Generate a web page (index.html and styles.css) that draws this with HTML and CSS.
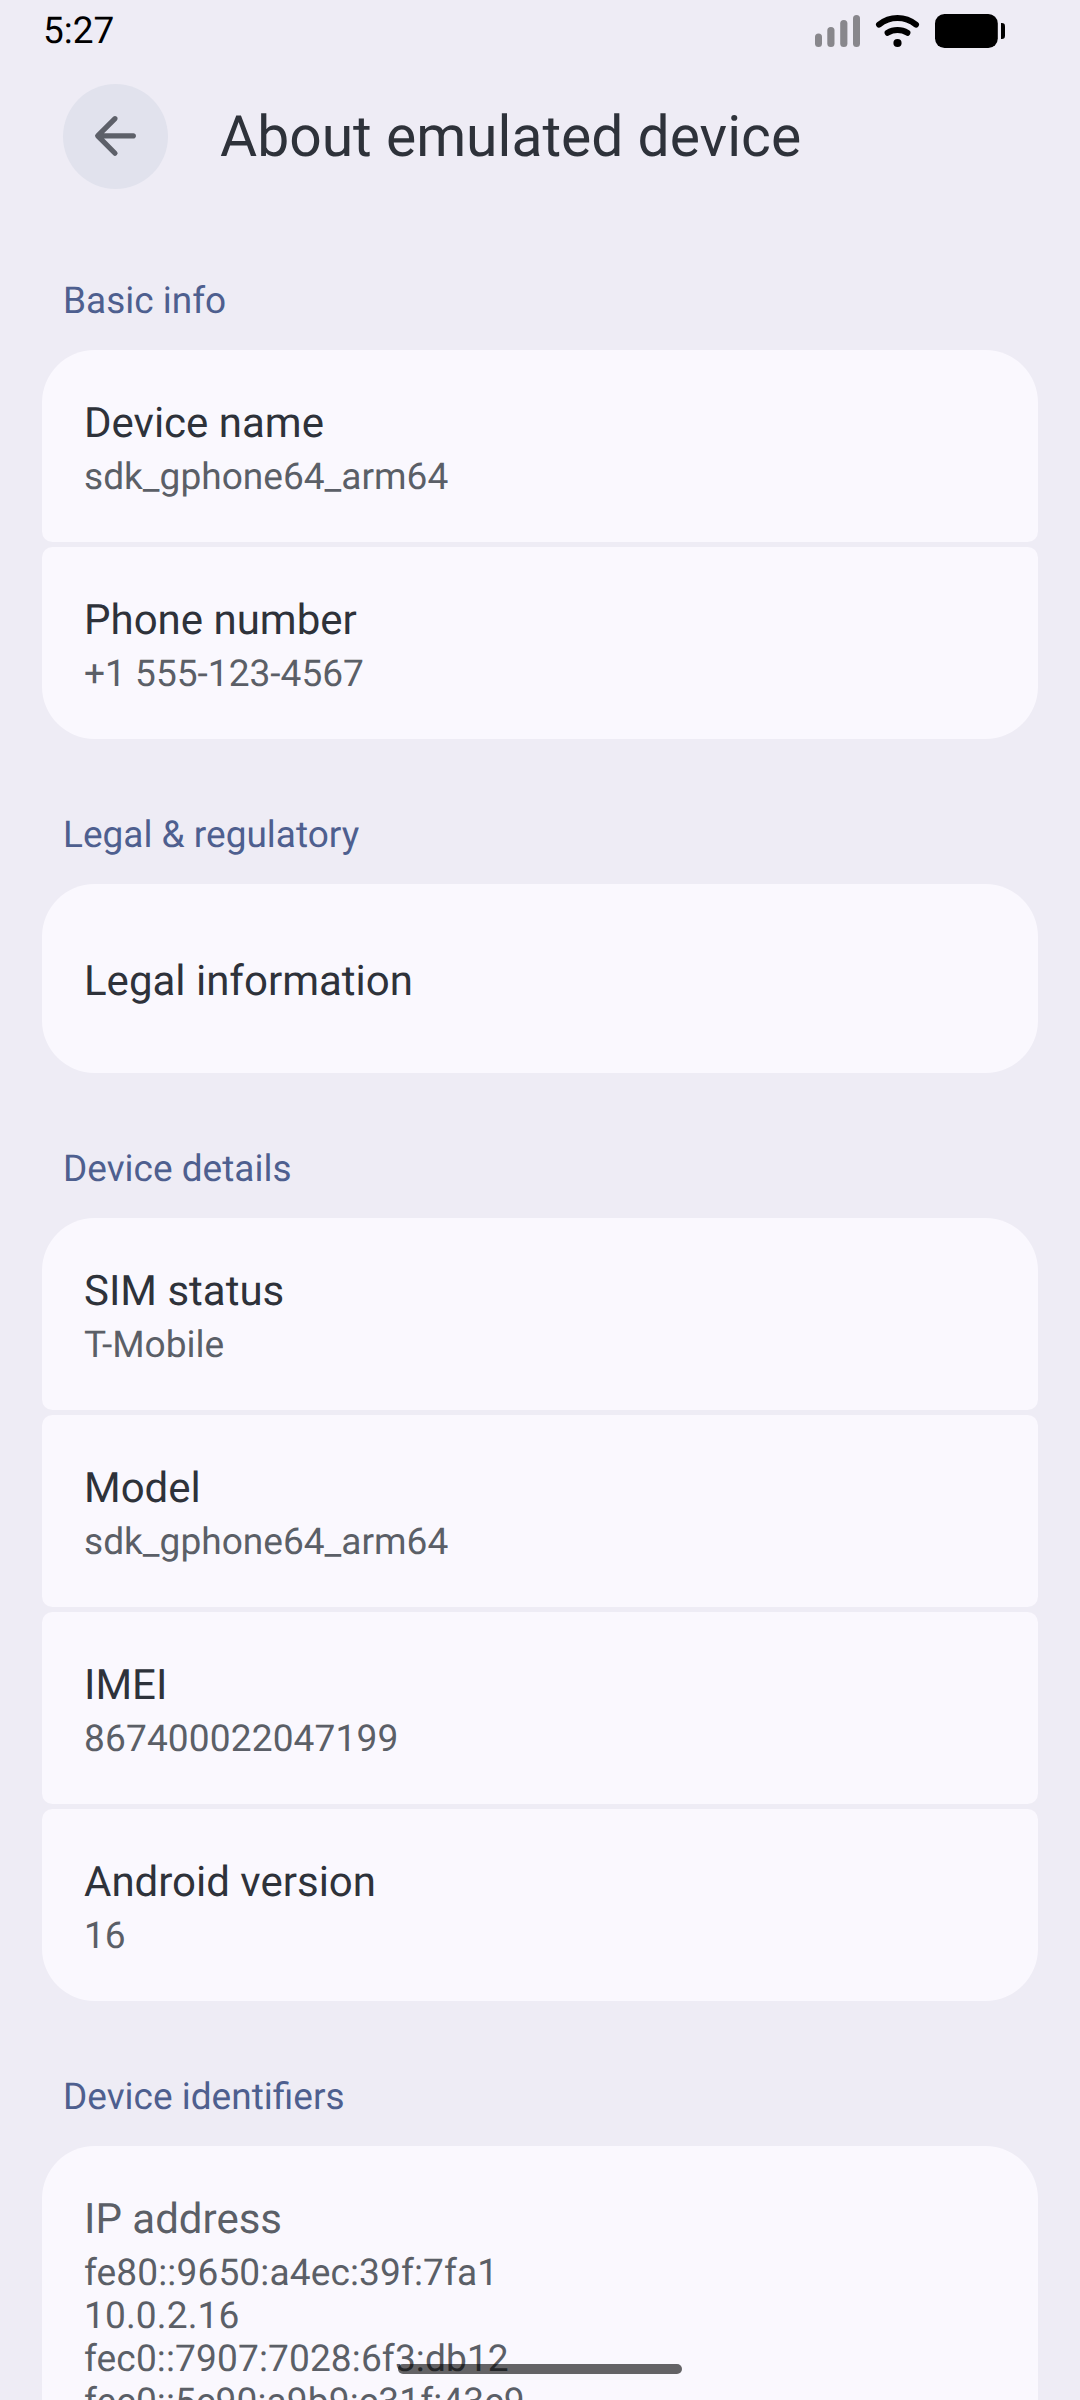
FILE: index.html
```
<!DOCTYPE html>
<html lang="en">
<head>
<meta charset="utf-8">
<title>About emulated device</title>
<link rel="stylesheet" href="styles.css">
</head>
<body>
<div class="screen">
  <header class="status-bar">
    <span class="clock">5:27</span>
    <svg class="status-icons" width="192" height="40" viewBox="814 11 192 40" aria-hidden="true">
      <g fill="#88878c">
        <rect x="815" y="33.5" width="7" height="13.5" rx="3.5"/>
        <rect x="827.3" y="27" width="7.2" height="20" rx="3.5"/>
        <rect x="840.2" y="20" width="7.2" height="27" rx="3.5"/>
        <rect x="853" y="15" width="7" height="32" rx="3.5"/>
      </g>
      <g fill="none" stroke="#000" stroke-width="6" stroke-linecap="round">
        <path d="M879 24.6C890 15.8 905 15.8 916 24.6"/>
        <path d="M887.6 32.8C893.5 29 901.5 29 907.4 32.8"/>
      </g>
      <circle cx="897.5" cy="43" r="4.1"/>
      <rect x="935" y="14" width="62.8" height="34" rx="9.5"/>
      <path d="M1001 23h.8a3.2 3.2 0 0 1 3.2 3.2v9.6a3.2 3.2 0 0 1-3.2 3.2h-.8z"/>
    </svg>
  </header>

  <div class="app-bar">
    <button class="back" aria-label="Navigate up">
      <svg width="63" height="63" viewBox="0.2 0.2 24 24" aria-hidden="true"><path d="M19 11H7.83l4.88-4.88c.39-.39.39-1.03 0-1.42a.996.996 0 0 0-1.41 0l-6.59 6.59a.996.996 0 0 0 0 1.41l6.59 6.59a.996.996 0 1 0 1.41-1.41L7.83 13H19c.55 0 1-.45 1-1s-.45-1-1-1z"/></svg>
    </button>
    <h1 class="page-title">About emulated device</h1>
  </div>

  <main class="sections">
    <section>
      <h2 class="category">Basic info</h2>
      <div class="group">
        <div class="item"><div class="title">Device name</div><div class="summary">sdk_gphone64_arm64</div></div>
        <div class="item"><div class="title">Phone number</div><div class="summary">+1 555-123-4567</div></div>
      </div>
    </section>
    <section>
      <h2 class="category">Legal &amp; regulatory</h2>
      <div class="group">
        <div class="item item-single"><div class="title">Legal information</div></div>
      </div>
    </section>
    <section>
      <h2 class="category">Device details</h2>
      <div class="group">
        <div class="item"><div class="title">SIM status</div><div class="summary">T-Mobile</div></div>
        <div class="item"><div class="title">Model</div><div class="summary">sdk_gphone64_arm64</div></div>
        <div class="item"><div class="title">IMEI</div><div class="summary digits">867400022047199</div></div>
        <div class="item"><div class="title">Android version</div><div class="summary">16</div></div>
      </div>
    </section>
    <section>
      <h2 class="category">Device identifiers</h2>
      <div class="group">
        <div class="item item-long"><div class="title title-disabled">IP address</div><div class="summary digits">fe80::9650:a4ec:39f:7fa1<br>10.0.2.16<br>fec0::7907:7028:6f3:db12<br>fec0::5c90:a9b9:c31f:43c9</div></div>
      </div>
    </section>
  </main>
  <div class="nav-handle"></div>
</div>
</body>
</html>
```
FILE: styles.css
```
* {
  box-sizing: border-box;
}

body {
  margin: 0;
  font-family: Roboto, "Noto Sans", sans-serif;
  text-rendering: geometricPrecision;
}

h1,
h2 {
  margin: 0;
  font-weight: 400;
}

.screen {
  position: relative;
  width: 1080px;
  height: 2400px;
  overflow: hidden;
  background: #eeecf5;
  color: #2e323a;
}

.status-bar {
  display: flex;
  justify-content: space-between;
  height: 84px;
  padding: 10px 74px 0 43px;
}

.clock {
  font-size: 37px;
  line-height: 43px;
  color: #000;
}

.status-icons {
  display: block;
  margin-top: 1px;
}

.app-bar {
  display: flex;
  align-items: center;
  gap: 52px;
  height: 105px;
  padding-left: 63px;
}

.back {
  display: grid;
  place-items: center;
  width: 105px;
  height: 105px;
  padding: 0;
  border: 0;
  border-radius: 50%;
  background: #e1e2ed;
  fill: #5d6069;
}

.page-title {
  font-size: 57px;
  line-height: 68px;
}

.sections {
  display: flex;
  flex-direction: column;
  gap: 75px;
  padding: 91px 42px 0;
}

.category {
  margin: 0 21px 27px;
  font-size: 37px;
  line-height: 43px;
  color: #4e5f8f;
}

.group {
  display: flex;
  flex-direction: column;
  gap: 5px;
}

.item {
  height: 192px;
  padding: 49px 42px 0;
  border-radius: 10.5px;
  background: #faf8fe;
}

.item:first-child {
  border-top-left-radius: 52.5px;
  border-top-right-radius: 52.5px;
}

.item:last-child {
  border-bottom-left-radius: 52.5px;
  border-bottom-right-radius: 52.5px;
}

.item-single {
  height: 189px;
  padding-top: 73px;
}

.item-long {
  height: auto;
  padding-bottom: 44px;
}

.title {
  margin-bottom: 7px;
  font-size: 42px;
  line-height: 50px;
}

.title-disabled,
.summary {
  color: #5b5f67;
}

.summary {
  font-size: 37.1px;
  line-height: 43px;
}

.digits {
  letter-spacing: 0.12px;
}

/* Gesture handle floats over the scrolling list */
.nav-handle {
  position: absolute;
  bottom: 26px;
  left: 398px;
  width: 284px;
  height: 10px;
  border-radius: 5px;
  background: rgba(0, 0, 0, 0.6);
}
```
